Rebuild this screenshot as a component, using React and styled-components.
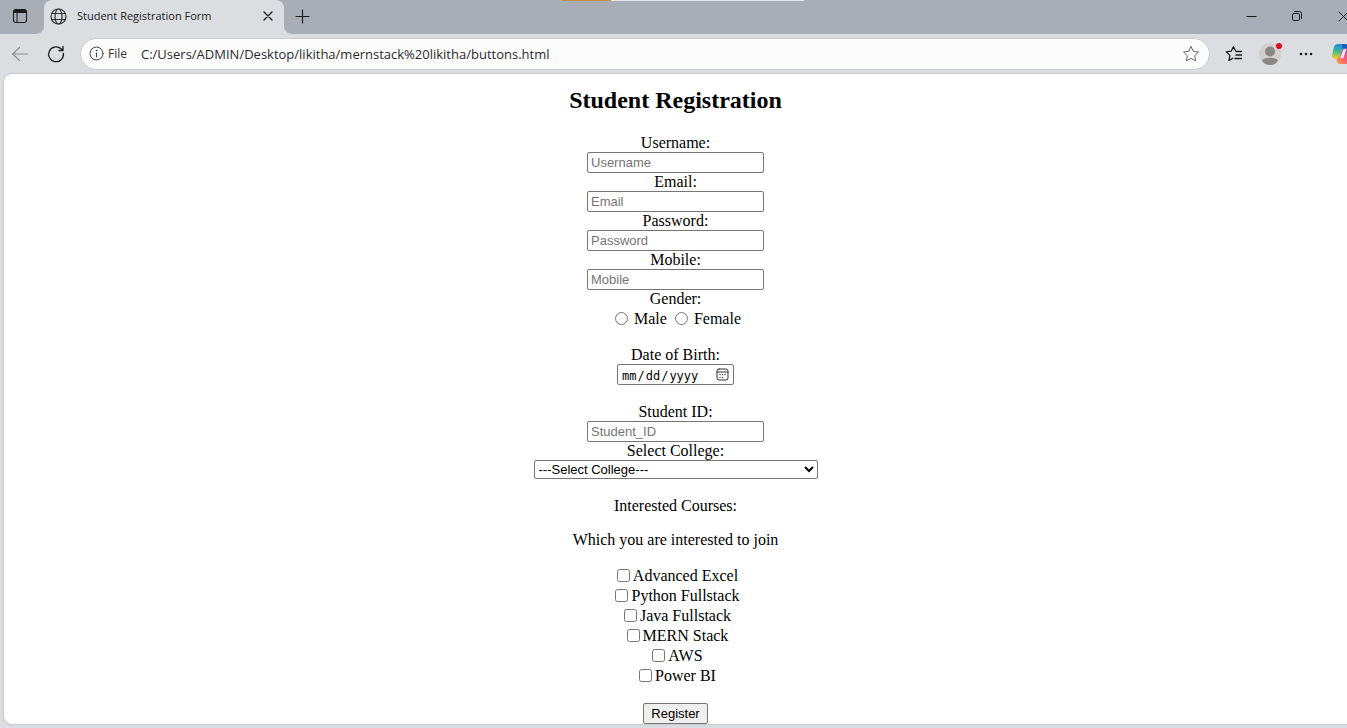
import React from "react";
import styled, { createGlobalStyle } from "styled-components";

const GlobalStyle = createGlobalStyle`
  * { box-sizing: border-box; }
  html, body, #root { height: 100%; margin: 0; }
  body { overflow: hidden; background: #dcdde1; }
`;

const Browser = styled.div`
  display: flex;
  flex-direction: column;
  min-height: 100vh;
  overflow: hidden;
  background: #dcdde1;
  color: #1b1b1b;
  font-family: "Open Sans", "Noto Sans", sans-serif;
`;

const TabStrip = styled.header`
  position: relative;
  display: flex;
  height: 34px;
`;

const StripStart = styled.div`
  display: flex;
  width: 44px;
  padding-right: 4px;
  background: #a9aeb6;
  border-bottom-right-radius: 8px;
`;

const StripEnd = styled.div`
  display: flex;
  flex: 1;
  justify-content: space-between;
  background: #a9aeb6;
  border-bottom-left-radius: 8px;
`;

const TabSlot = styled.div`
  width: 240px;
  background: linear-gradient(#a9aeb6 50%, #dcdde1 50%);
`;

const Tab = styled.div`
  display: flex;
  align-items: center;
  height: 34px;
  padding: 0 2px 2px 6px;
  gap: 10px;
  background: #dcdde1;
  border-radius: 8px 8px 0 0;
`;

const TabTitle = styled.span`
  flex: 1;
  font-size: 11px;
  line-height: 16px;
  white-space: nowrap;
`;

const IconButton = styled.button`
  display: flex;
  flex: none;
  align-items: center;
  justify-content: center;
  width: ${({ $width }) => $width}px;
  height: 32px;
  padding: 0;
  border: 0;
  background: transparent;
  color: ${({ $muted }) => ($muted ? "#8b8d91" : "#1b1b1b")};
`;

const WindowControls = styled.div`
  display: flex;
  margin-right: -19px;
`;

const LoadBar = styled.div`
  position: absolute;
  top: 0;
  left: 50%;
  width: 242px;
  height: 1px;
  margin-left: -112px;
  background: linear-gradient(90deg, #bd9347 49px, #e3e6ea 49px);
`;

const Toolbar = styled.nav`
  display: flex;
  align-items: center;
  height: 40px;
  padding-left: 2px;
`;

const AddressBar = styled.div`
  display: flex;
  flex: 1;
  align-items: center;
  height: 32px;
  margin: 0 6px;
  padding-left: 8px;
  border: 1px solid #cbccd0;
  border-radius: 16px;
  background: #fcfcfc;
`;

const Scheme = styled.span`
  width: 33px;
  margin-left: 3px;
  color: #333;
  font-size: 12px;
  line-height: 16px;
`;

const Address = styled.input`
  flex: 1;
  min-width: 0;
  height: 28px;
  padding: 0;
  border: 0;
  outline: 0;
  background: transparent;
  color: #2b2b2b;
  font: 13px/20px "Open Sans", "Noto Sans", sans-serif;
`;

const ToolbarActions = styled.div`
  display: flex;
  margin-right: -13px;
`;

const Page = styled.main`
  flex: 1;
  margin: 0 0 4px 4px;
  padding-top: 13px;
  border-radius: 8px 0 0 8px;
  background: #fff;
  box-shadow: 0 0 2px #9d9fa4;
  color: #000;
  font: 16px/18px "Liberation Serif", "Times New Roman", serif;
  text-align: center;
`;

const Heading = styled.h2`
  margin: 0 0 20px;
  font-size: 24px;
  line-height: 27px;
`;

const Form = styled.form`
  display: flex;
  flex-direction: column;
  align-items: center;
`;

const Field = styled.div`
  display: flex;
  flex-direction: column;
  align-items: center;
  margin-bottom: ${({ $gap = 0 }) => $gap}px;
`;

const TextInput = styled.input`
  width: 177px;
  height: 21px;
  padding: 1px 3px;
  border: 1px solid #767676;
  border-radius: 2px;
  background: #fff;
  font: 13px/17px "Liberation Sans", Arial, sans-serif;
  &::placeholder { color: #757575; }
`;

const DateBox = styled.div`
  position: relative;
  display: flex;
  svg {
    position: absolute;
    top: 4px;
    right: 5px;
    pointer-events: none;
  }
`;

const DateInput = styled(TextInput)`
  width: 117px;
  padding: 2px 3px 0;
  font: 12px/18px "DejaVu Sans Mono", monospace;
  &::-webkit-calendar-picker-indicator { opacity: 0; margin: 0; }
`;

const Select = styled.select`
  width: 284px;
  height: 19px;
  border: 1px solid #767676;
  border-radius: 2px;
  background: #fff;
  color: #000;
  font: 13px/17px "Liberation Sans", Arial, sans-serif;
`;

const Group = styled.fieldset`
  min-width: 0;
  margin: 0 0 17px;
  padding: 0;
  border: 0;
`;

const Legend = styled.legend`
  width: 100%;
  padding: 0;
`;

const Prompt = styled.p`
  margin: 0 0 16px;
`;

const Choices = styled.div`
  display: flex;
  flex-direction: ${({ $column }) => ($column ? "column" : "row")};
  align-items: center;
  justify-content: center;
  gap: ${({ $column }) => ($column ? 0 : 8)}px;
  padding: 1px 0 0 ${({ $column }) => ($column ? 4 : 5)}px;
`;

const Choice = styled.label`
  display: flex;
  gap: ${({ $gap }) => $gap}px;
  line-height: 20px;
  input {
    width: 13px;
    height: 13px;
    margin: 3px 0 0;
  }
`;

const Submit = styled.button`
  height: 21px;
  padding: 1px 7px;
  border: 1px solid #767676;
  border-radius: 2px;
  background: #efefef;
  color: #000;
  font: 13px/17px "Liberation Sans", Arial, sans-serif;
`;

const Svg = ({ size = 16, children, stroke = "currentColor", ...rest }) => (
  <svg width={size} height={size} viewBox={`0 0 ${size} ${size}`} fill="none" stroke={stroke} strokeLinecap="round" strokeLinejoin="round" aria-hidden="true" {...rest}>
    {children}
  </svg>
);

const WorkspaceIcon = () => (
  <Svg>
    <rect x="1.5" y="1.5" width="13" height="13" rx="2.5" strokeWidth="1.1" />
    <path d="M2 4V3q0-1 1-1h10q1 0 1 1v1.5H2z" fill="currentColor" />
    <path d="M5 5v9" />
  </Svg>
);

const GlobeIcon = () => (
  <Svg size={17} stroke="#333" strokeWidth="1.2">
    <circle cx="8.5" cy="8.5" r="7.5" />
    <ellipse cx="8.5" cy="8.5" rx="3.5" ry="7.5" />
    <path d="M1.8 5.5h13.4M1.8 11.5h13.4" />
  </Svg>
);

const CloseIcon = ({ size = 10 }) => (
  <Svg size={size} strokeWidth={size === 10 ? 1.3 : 1}>
    <path d={size === 10 ? "M1 1l8 8M9 1L1 9" : "M1 1l9 9M10 1L1 10"} />
  </Svg>
);

const PlusIcon = () => (
  <Svg size={15}><path d="M7.5 1v13M1 7.5h13" strokeWidth="1.2" /></Svg>
);

const MinimizeIcon = () => (
  <Svg size={11}><path d="M1 5.5h9" /></Svg>
);

const RestoreIcon = () => (
  <Svg size={12}>
    <rect x="1.5" y="3.5" width="7" height="7" rx="1.2" />
    <path d="M3.5 1.5h5q2 0 2 2v5" />
  </Svg>
);

const BackIcon = () => (
  <Svg><path d="M15.5 8H.7M7.5 1.5L.7 8l6.8 6.5" strokeWidth="1.1" /></Svg>
);

const ReloadIcon = () => (
  <Svg size={18}>
    <path d="M16.4 8.5a7.4 7.4 0 1 1-2.6-4.9l2 1.7M16 1.5v4h-4" strokeWidth="1.3" />
  </Svg>
);

const InfoIcon = () => (
  <Svg stroke="#444">
    <circle cx="7.5" cy="7.5" r="6.5" />
    <path d="M7.5 7v3.8" strokeWidth="1.2" />
    <circle cx="7.5" cy="4.5" r=".4" fill="#444" />
  </Svg>
);

const StarIcon = () => (
  <Svg size={18} stroke="#66686b">
    <path d="M9 1.6l2.3 4.7 5.2.7-3.8 3.7.9 5.2L9 13.4l-4.6 2.5.9-5.2L1.5 7l5.2-.7z" />
  </Svg>
);

const FavoritesIcon = () => (
  <Svg size={18} strokeWidth="1.3">
    <path d="M16.5 6.5H11L8.4 1.7 6.2 6.2l-4.9.7 3.6 3.5-.9 5 3.9-2.1M11 10h5.5M10 13.5h6.5" />
  </Svg>
);

const ProfileIcon = () => (
  <svg width="24" height="24" viewBox="0 0 24 24" aria-hidden="true">
    <circle cx="12" cy="12" r="11" fill="#d2cfcc" />
    <circle cx="12" cy="9.5" r="5" fill="#8b8784" />
    <path d="M4 18.5Q6 15.7 12 15.7t8 2.8q-2.5 4.5-8 4.5t-8-4.5z" fill="#8b8784" />
    <circle cx="21" cy="4" r="3" fill="#d70f1b" />
  </svg>
);

const MoreIcon = () => (
  <svg width="16" height="4" viewBox="0 0 16 4" fill="#1b1b1b" aria-hidden="true">
    <circle cx="3" cy="2" r="1.3" />
    <circle cx="8" cy="2" r="1.3" />
    <circle cx="13" cy="2" r="1.3" />
  </svg>
);

const CopilotIcon = () => (
  <svg width="20" height="20" viewBox="0 0 20 20" aria-hidden="true">
    <defs>
      <linearGradient id="cool" x1="0.5" y1="0" x2="0.3" y2="1">
        <stop offset="0" stopColor="#1a8ee6" />
        <stop offset=".5" stopColor="#3fb795" />
        <stop offset="1" stopColor="#f2cb1e" />
      </linearGradient>
      <linearGradient id="warm" x1="1" y1="0" x2="0" y2="1">
        <stop offset="0" stopColor="#a553d4" />
        <stop offset=".5" stopColor="#f15b78" />
        <stop offset="1" stopColor="#ff9d42" />
      </linearGradient>
    </defs>
    <path d="M14 20H8q-2.2 0-2.8-2L4.3 14.5q2.7 0 3.5-2.5l2-6q.8-2 3-2h3q4 0 3 5l-1.3 8q-.8 3-3.5 3z" fill="url(#warm)" />
    <path d="M6 0h7q2 0 2.5 2l.5 2.3h-3.5q-2 0-2.6 2L8 12q-.8 2.8-3.4 2.8H3q-3.6 0-2.8-4.8L2 3q1-3 4-3z" fill="url(#cool)" />
    <path d="M10 0h3q2 0 2.5 2l.5 2.3h-3.5q-1.3 0-2 .9z" fill="#155bb7" />
    <path d="M11 6.5q.4-1.2 1.8-1.2h1.4L11.7 13q-.4 1.4-1.8 1.4H8.2z" fill="#eceef2" />
  </svg>
);

const CalendarIcon = () => (
  <Svg size={13} stroke="#333">
    <rect x="1" y="1" width="11" height="11" rx="2" />
    <path d="M1 4h11" />
    <path d="M4 6.7h.1M6.5 6.7h.1M9 6.7h.1M4 9.3h.1M6.5 9.3h.1" strokeWidth="1.3" />
  </Svg>
);

const LabelledInput = ({ id, label, placeholder, type = "text" }) => (
  <Field>
    <label htmlFor={id}>{label}</label>
    <TextInput id={id} type={type} placeholder={placeholder} />
  </Field>
);

const courses = ["Advanced Excel", "Python Fullstack", "Java Fullstack", "MERN Stack", "AWS", "Power BI"];

export default function App() {
  return (
    <Browser>
      <GlobalStyle />
      <TabStrip>
        <StripStart>
          <IconButton $width={40} aria-label="Tab actions"><WorkspaceIcon /></IconButton>
        </StripStart>
        <TabSlot>
          <Tab>
            <GlobeIcon />
            <TabTitle>Student Registration Form</TabTitle>
            <IconButton $width={28} aria-label="Close tab"><CloseIcon /></IconButton>
          </Tab>
        </TabSlot>
        <StripEnd>
          <IconButton $width={36} aria-label="New tab"><PlusIcon /></IconButton>
          <WindowControls>
            <IconButton $width={46} aria-label="Minimize"><MinimizeIcon /></IconButton>
            <IconButton $width={46} aria-label="Restore"><RestoreIcon /></IconButton>
            <IconButton $width={46} aria-label="Close window"><CloseIcon size={11} /></IconButton>
          </WindowControls>
        </StripEnd>
        <LoadBar />
      </TabStrip>
      <Toolbar>
        <IconButton $width={36} $muted aria-label="Back"><BackIcon /></IconButton>
        <IconButton $width={36} aria-label="Refresh"><ReloadIcon /></IconButton>
        <AddressBar>
          <InfoIcon />
          <Scheme>File</Scheme>
          <Address
            type="text"
            aria-label="Address"
            defaultValue="C:/Users/ADMIN/Desktop/likitha/mernstack%20likitha/buttons.html"
          />
          <IconButton $width={36} aria-label="Add to favorites"><StarIcon /></IconButton>
        </AddressBar>
        <ToolbarActions>
          <IconButton $width={36} aria-label="Favorites"><FavoritesIcon /></IconButton>
          <IconButton $width={36} aria-label="Profile"><ProfileIcon /></IconButton>
          <IconButton $width={36} aria-label="Settings and more"><MoreIcon /></IconButton>
          <IconButton $width={36} aria-label="Copilot"><CopilotIcon /></IconButton>
        </ToolbarActions>
      </Toolbar>
      <Page>
        <Heading>Student Registration</Heading>
        <Form onSubmit={(event) => event.preventDefault()}>
          <LabelledInput id="username" label="Username:" placeholder="Username" />
          <LabelledInput id="email" label="Email:" placeholder="Email" type="email" />
          <LabelledInput id="password" label="Password:" placeholder="Password" type="password" />
          <LabelledInput id="mobile" label="Mobile:" placeholder="Mobile" />
          <Group>
            <Legend>Gender:</Legend>
            <Choices>
              <Choice $gap={6}><input type="radio" name="gender" />Male</Choice>
              <Choice $gap={6}><input type="radio" name="gender" />Female</Choice>
            </Choices>
          </Group>
          <Field $gap={18}>
            <label htmlFor="dob">Date of Birth:</label>
            <DateBox>
              <DateInput id="dob" type="date" />
              <CalendarIcon />
            </DateBox>
          </Field>
          <LabelledInput id="student-id" label="Student ID:" placeholder="Student_ID" />
          <Field $gap={18}>
            <label htmlFor="college">Select College:</label>
            <Select id="college">
              <option>---Select College---</option>
            </Select>
          </Field>
          <Prompt>Interested Courses:</Prompt>
          <Prompt id="course-prompt">Which you are interested to join</Prompt>
          <Group aria-labelledby="course-prompt">
            <Choices $column>
              {courses.map((course) => (
                <Choice key={course} $gap={3}><input type="checkbox" />{course}</Choice>
              ))}
            </Choices>
          </Group>
          <Submit type="submit">Register</Submit>
        </Form>
      </Page>
    </Browser>
  );
}
